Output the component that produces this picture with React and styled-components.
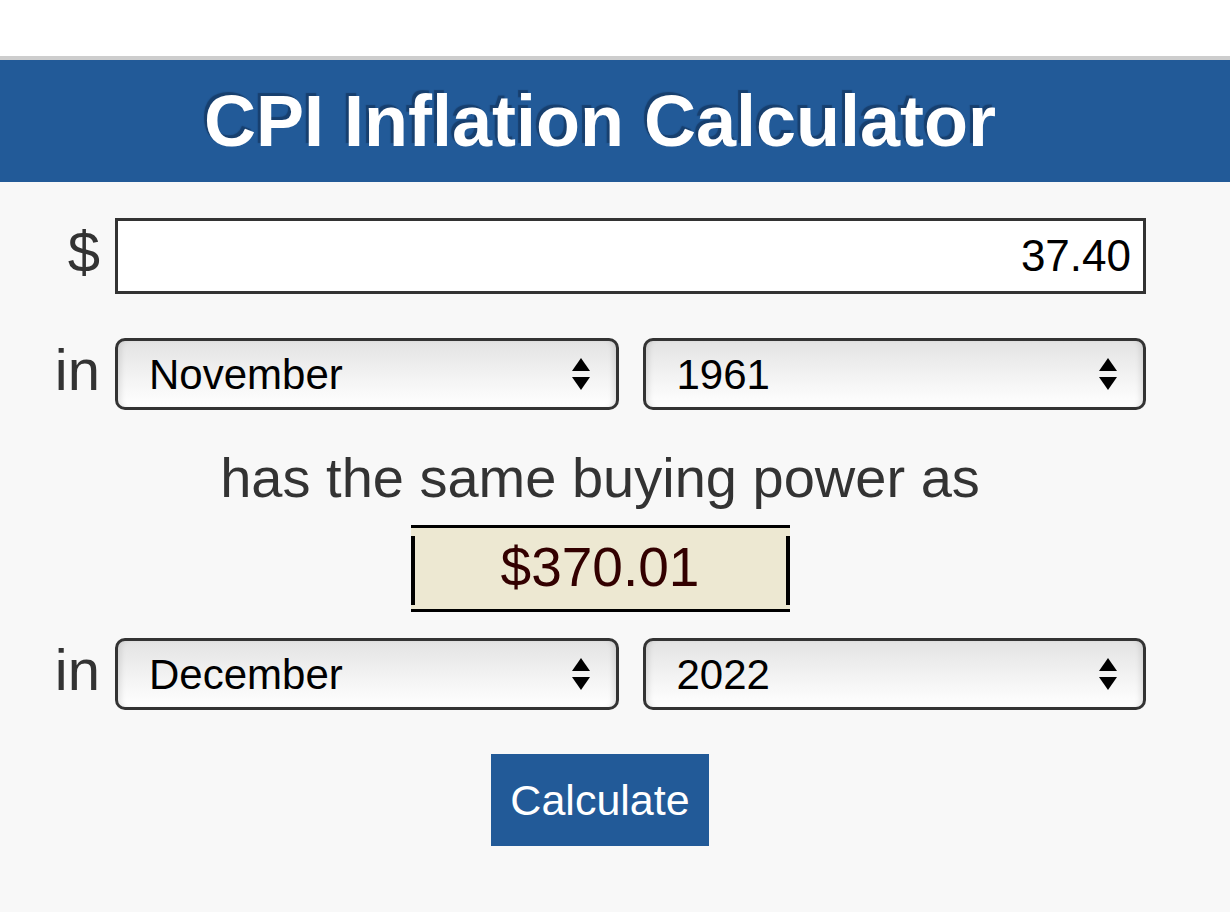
import React, { useState } from "react";
import styled, { createGlobalStyle } from "styled-components";

const months = [
  "January", "February", "March", "April", "May", "June",
  "July", "August", "September", "October", "November", "December",
];
const years = Array.from({ length: 110 }, (_, i) => String(1913 + i));

const GlobalStyle = createGlobalStyle`
  body {
    margin: 0;
    background: #ffffff;
    font-family: "Liberation Sans", Arial, Helvetica, sans-serif;
  }
`;

export default function App() {
  const [amount, setAmount] = useState("37.40");
  const [fromMonth, setFromMonth] = useState("November");
  const [fromYear, setFromYear] = useState("1961");
  const [toMonth, setToMonth] = useState("December");
  const [toYear, setToYear] = useState("2022");

  return (
    <>
      <GlobalStyle />
      <Page>
        <Panel>
          <Header>
            <Title>CPI Inflation Calculator</Title>
          </Header>
          <Form>
            <FieldRow>
              <Label>$</Label>
              <AmountInput value={amount} onChange={(e) => setAmount(e.target.value)} />
            </FieldRow>

            <FieldRow $top={44}>
              <Label>in</Label>
              <SelectPair>
                <Dropdown value={fromMonth} onChange={setFromMonth} options={months} />
                <Dropdown value={fromYear} onChange={setFromYear} options={years} />
              </SelectPair>
            </FieldRow>

            <Center $top={36}>
              <Sentence>has the same buying power as</Sentence>
              <Result>$370.01</Result>
            </Center>

            <FieldRow $top={26}>
              <Label>in</Label>
              <SelectPair>
                <Dropdown value={toMonth} onChange={setToMonth} options={months} />
                <Dropdown value={toYear} onChange={setToYear} options={years} />
              </SelectPair>
            </FieldRow>

            <Center $top={44}>
              <CalcButton type="button">Calculate</CalcButton>
            </Center>
          </Form>
        </Panel>
      </Page>
    </>
  );
}

function Dropdown({ value, onChange, options }) {
  return (
    <SelectWrap>
      <Select value={value} onChange={(e) => onChange(e.target.value)}>
        {options.map((o) => (
          <option key={o} value={o}>
            {o}
          </option>
        ))}
      </Select>
      <Arrows viewBox="0 0 20 34" aria-hidden="true">
        <path d="M10 1 L19 14 L1 14 Z" />
        <path d="M1 20 L19 20 L10 33 Z" />
      </Arrows>
    </SelectWrap>
  );
}

const Page = styled.div`
  padding-top: 56px;
  background: #ffffff;
`;

const Panel = styled.div`
  border-top: 4px solid #cdcdcd;
  background: #f8f8f8;
  min-height: 852px;
`;

const Header = styled.div`
  height: 122px;
  background: #225a98;
  display: flex;
  align-items: center;
  justify-content: center;
  padding-right: 30px;
`;

const Title = styled.h1`
  margin: 0;
  color: #ffffff;
  font-size: 72px;
  font-weight: bold;
  text-shadow: -3px -3px 1px #173f6e;
`;

const Form = styled.div`
  padding: 36px 0 66px;
`;

const FieldRow = styled.div`
  display: grid;
  grid-template-columns: 100px 1fr;
  column-gap: 15px;
  align-items: center;
  margin-top: ${(p) => p.$top || 0}px;
  margin-right: 84px;
`;

const Label = styled.div`
  text-align: right;
  font-size: 58px;
  color: #333333;
  line-height: 1;
  padding-bottom: 8px;
`;

const AmountInput = styled.input`
  box-sizing: border-box;
  width: 100%;
  height: 76px;
  border: 3px solid #333333;
  border-radius: 0;
  background: #ffffff;
  text-align: right;
  font-family: inherit;
  font-size: 44px;
  color: #000000;
  padding: 0 12px;
  outline: none;
`;

const SelectPair = styled.div`
  display: grid;
  grid-template-columns: 1fr 1fr;
  column-gap: 24px;
`;

const SelectWrap = styled.div`
  position: relative;
`;

const Select = styled.select`
  appearance: none;
  -webkit-appearance: none;
  box-sizing: border-box;
  width: 100%;
  height: 72px;
  border: 3px solid #333333;
  border-radius: 10px;
  background: linear-gradient(#e3e3e3, #f3f3f3 55%, #ffffff);
  box-shadow: inset 6px 0 6px -4px rgba(0, 0, 0, 0.12),
    inset -6px 0 6px -4px rgba(0, 0, 0, 0.12);
  font-family: inherit;
  font-size: 42px;
  color: #000000;
  padding: 0 60px 0 31px;
  outline: none;
`;

const Arrows = styled.svg`
  position: absolute;
  right: 28px;
  top: 50%;
  width: 20px;
  height: 34px;
  transform: translateY(-50%);
  fill: #000000;
  pointer-events: none;
`;

const Center = styled.div`
  display: flex;
  flex-direction: column;
  align-items: center;
  padding-right: 30px;
  margin-top: ${(p) => p.$top || 0}px;
`;

const Sentence = styled.div`
  font-size: 56px;
  color: #333333;
  line-height: 64px;
`;

const Result = styled.div`
  position: relative;
  box-sizing: border-box;
  width: 379px;
  height: 87px;
  margin-top: 15px;
  border-top: 3px solid #000000;
  border-bottom: 3px solid #000000;
  background: #ede8d2;
  font-size: 55px;
  line-height: 78px;
  text-align: center;
  color: #330000;
  &::before,
  &::after {
    content: "";
    position: absolute;
    top: 8px;
    bottom: 4px;
    width: 4px;
    background: #000000;
  }
  &::before {
    left: 0;
  }
  &::after {
    right: 0;
  }
`;

const CalcButton = styled.button`
  width: 218px;
  height: 92px;
  border: none;
  background: #225a98;
  color: #ffffff;
  font-family: inherit;
  font-size: 43px;
  cursor: pointer;
`;
